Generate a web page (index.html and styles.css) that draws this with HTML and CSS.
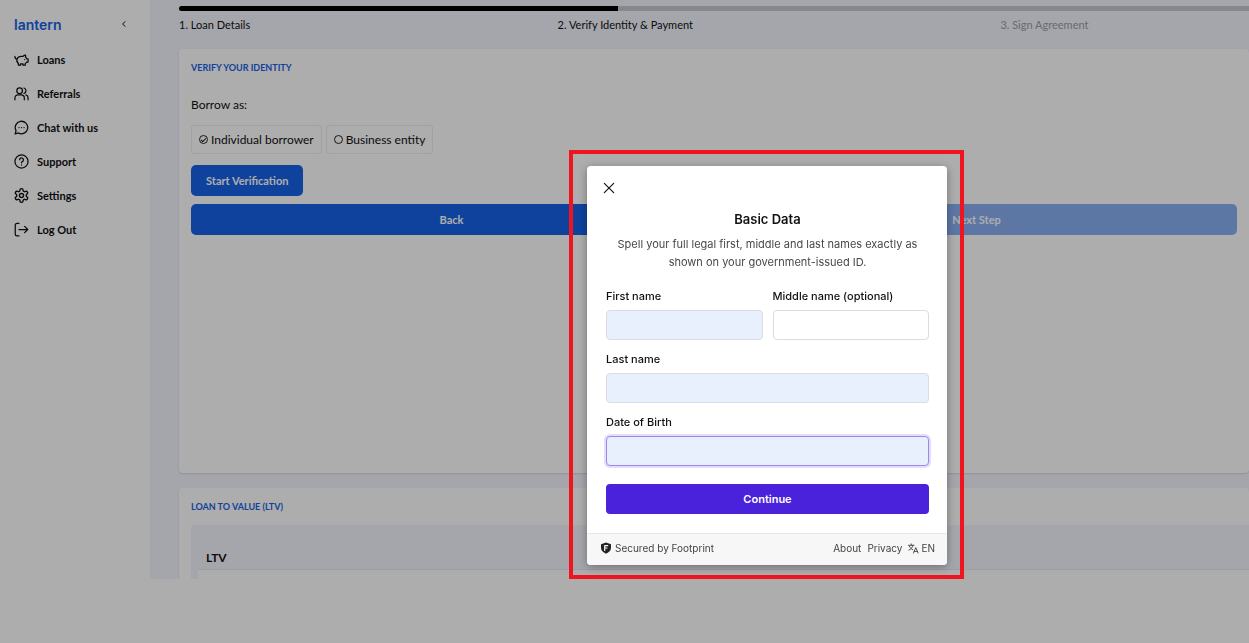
FILE: index.html
```html
<!DOCTYPE html>
<html lang="en">
<head>
    <meta charset="UTF-8">
    <meta name="viewport" content="width=device-width, initial-scale=1.0">
    <title>Lantern — Verify Identity</title>
    <link rel="stylesheet" href="styles.css">
</head>
<body>
    <div class="app">
        <aside class="sidebar">
            <div class="sidebar-top">
                <a href="#" class="logo">lantern</a>
                <button class="collapse" aria-label="Collapse menu">
                    <svg viewBox="0 0 24 24"><path d="M15 5l-7 7 7 7"/></svg>
                </button>
            </div>
            <nav>
                <a href="#">
                    <svg viewBox="0 0 24 24"><path d="M1.500 7c0 2.700 1.200 4.200 3.500 4.200M5 11.200c1-2.700 3.400-4.200 6.500-4.200h3c1-1.300 2.300-2 4-2v3.500c.9.700 1.500 1.500 1.900 2.500H22.500v5h-2.300c-.5 1-1.200 1.700-2.200 2.300V21h-3.500v-2h-4v2H7v-2.800c-2.400-1.700-3-4.200-2-7z"/><path d="M17 12v.1"/></svg>
                    Loans
                </a>
                <a href="#">
                    <svg viewBox="0 0 24 24"><circle cx="9" cy="7.500" r="4.500"/><path d="M1.500 22v-3a5 5 0 0 1 5-5h5a5 5 0 0 1 5 5v3M16 3.200a4.500 4.500 0 0 1 0 8.600M19 14.300a5 5 0 0 1 3.500 4.700v3"/></svg>
                    Referrals
                </a>
                <a href="#">
                    <svg viewBox="0 0 24 24"><path d="M7 20.700A10 10 0 1 0 3.300 17L1.800 22.200z"/><path d="M8 12h.1M12 12h.1M16 12h.1"/></svg>
                    Chat with us
                </a>
                <a href="#">
                    <svg viewBox="0 0 24 24"><circle cx="12" cy="12" r="10.500"/><path d="M9 9a3 3 0 0 1 6 .8c0 2-3 2.500-3 4.200M12 17.500v.1"/></svg>
                    Support
                </a>
                <a href="#">
                    <svg viewBox="1 1 22 22"><path d="M12.220 2h-.44a2 2 0 0 0-2 2v.18a2 2 0 0 1-1 1.730l-.43.25a2 2 0 0 1-2 0l-.15-.08a2 2 0 0 0-2.730.73l-.22.38a2 2 0 0 0 .73 2.730l.15.1a2 2 0 0 1 1 1.720v.51a2 2 0 0 1-1 1.740l-.15.09a2 2 0 0 0-.73 2.730l.22.38a2 2 0 0 0 2.730.73l.15-.08a2 2 0 0 1 2 0l.43.25a2 2 0 0 1 1 1.730V20a2 2 0 0 0 2 2h.44a2 2 0 0 0 2-2v-.18a2 2 0 0 1 1-1.730l.43-.25a2 2 0 0 1 2 0l.15.08a2 2 0 0 0 2.730-.73l.22-.39a2 2 0 0 0-.73-2.730l-.15-.08a2 2 0 0 1-1-1.740v-.5a2 2 0 0 1 1-1.740l.15-.09a2 2 0 0 0 .73-2.730l-.22-.38a2 2 0 0 0-2.730-.73l-.15.08a2 2 0 0 1-2 0l-.43-.25a2 2 0 0 1-1-1.730V4a2 2 0 0 0-2-2z"/><circle cx="12" cy="12" r="3"/></svg>
                    Settings
                </a>
                <a href="#">
                    <svg viewBox="0 0 24 24"><path d="M8 22H5a3 3 0 0 1-3-3V5a3 3 0 0 1 3-3h3M8 12h14M17 7l5 5-5 5"/></svg>
                    Log Out
                </a>
            </nav>
        </aside>

        <main class="main">
            <div class="progress"><div class="progress-fill"></div></div>
            <ol class="steps">
                <li>1. Loan Details</li>
                <li>2. Verify Identity &amp; Payment</li>
                <li class="upcoming">3. Sign Agreement</li>
            </ol>

            <section class="card identity">
                <h2>VERIFY YOUR IDENTITY</h2>
                <p class="borrow">Borrow as:</p>
                <div class="choices">
                    <label class="choice"><input type="radio" name="borrower" checked>Individual borrower</label>
                    <label class="choice"><input type="radio" name="borrower">Business entity</label>
                </div>
                <button class="btn start">Start Verification</button>
                <div class="actions">
                    <button class="btn">Back</button>
                    <button class="btn" disabled>Next Step</button>
                </div>
            </section>

            <section class="card ltv">
                <h2>LOAN TO VALUE (LTV)</h2>
                <div class="ltv-box">
                    <h3>LTV</h3>
                    <div class="ltv-chart"></div>
                </div>
            </section>
        </main>
    </div>

    <div class="overlay">
        <div class="highlight">
            <form class="modal" role="dialog" aria-labelledby="modalTitle">
                <div class="modal-body">
                    <button type="button" class="close" aria-label="Close">
                        <svg viewBox="0 0 12 12"><path d="M2 2l8 8M10 2l-8 8"/></svg>
                    </button>
                    <h1 id="modalTitle">Basic Data</h1>
                    <p class="intro">Spell your full legal first, middle and last names exactly as shown on your government-issued ID.</p>
                    <div class="row">
                        <div class="field">
                            <label for="firstName">First name</label>
                            <input type="text" id="firstName" class="filled">
                        </div>
                        <div class="field">
                            <label for="middleName">Middle name (optional)</label>
                            <input type="text" id="middleName">
                        </div>
                    </div>
                    <div class="field">
                        <label for="lastName">Last name</label>
                        <input type="text" id="lastName" class="filled">
                    </div>
                    <div class="field">
                        <label for="dob">Date of Birth</label>
                        <input type="text" id="dob" class="filled active">
                    </div>
                    <button type="submit" class="continue">Continue</button>
                </div>
                <div class="modal-footer">
                    <span class="secured">
                        <svg viewBox="0 0 12 12"><path d="M6 .5l5 1.800v3.500c0 2.800-2 4.700-5 5.900-3-1.200-5-3.100-5-5.900V2.300z" fill="#222"/><path d="M4.700 8.500V3.700h3M4.700 6h2.300" fill="none" stroke="#fff" stroke-width="1.200"/></svg>
                        Secured by Footprint
                    </span>
                    <a href="#">About</a>
                    <a href="#">Privacy</a>
                    <button type="button" class="lang">
                        <svg viewBox="0 0 12 12"><path d="M.5 2.500h6M3.500 1v1.500M5.500 2.500C5 5 3 7 1 7.700M1.500 3.500C2.200 5.200 4 6.800 5.300 7.400M6 11l2.500-6L11 11M6.800 9.200h3.400"/></svg>
                        EN
                    </button>
                </div>
            </form>
        </div>
    </div>
</body>
</html>
```

FILE: styles.css
```css
* {
    box-sizing: border-box;
}

body {
    margin: 0;
    background-color: #fff;
    color: #111;
    font-family: 'Lato', sans-serif;
    font-size: 11px;
}

h1, h2, h3, p, ol {
    margin: 0;
    padding: 0;
}

button, input {
    font-family: inherit;
    font-size: inherit;
    margin: 0;
}

button {
    border: none;
    padding: 0;
    background: none;
    color: inherit;
    cursor: pointer;
}

a {
    color: inherit;
    text-decoration: none;
}

svg {
    fill: none;
    stroke: currentColor;
    stroke-width: 2;
    stroke-linecap: round;
    stroke-linejoin: round;
    flex-shrink: 0;
}

.app {
    display: flex;
    height: 90vh;
    overflow: hidden;
}

/* Sidebar */
.sidebar {
    width: 150px;
    flex-shrink: 0;
    padding: 13px 20px 0 14px;
}

.sidebar-top {
    display: flex;
    align-items: center;
    justify-content: space-between;
    height: 22px;
    margin-bottom: 7px;
}

.logo {
    color: #1662e7;
    font-family: 'Inter', sans-serif;
    font-size: 14px;
    font-weight: 600;
}

.collapse {
    width: 10px;
    height: 10px;
}

.collapse svg {
    display: block;
    width: 8px;
    height: 8px;
    stroke-width: 3;
}

.sidebar nav a {
    display: flex;
    align-items: center;
    gap: 8px;
    height: 34px;
    font-weight: 700;
}

.sidebar nav svg {
    width: 15px;
    height: 15px;
}

/* Content */
.main {
    flex: 1;
    min-width: 0;
    padding: 6px 0 0 29px;
    background-color: #f4f5fe;
}

.progress {
    height: 5px;
    border-radius: 3px 0 0 3px;
    background-color: #c8c8d0;
}

.progress-fill {
    width: 41%;
    height: 100%;
    border-radius: 3px 0 0 3px;
    background-color: #000;
}

.steps {
    display: flex;
    justify-content: space-between;
    width: 85%;
    height: 38px;
    padding-top: 6px;
    line-height: 16px;
    list-style: none;
}

.upcoming {
    color: #9a9ba8;
}

.card {
    padding: 12px;
    background-color: #fff;
    border-radius: 4px;
    box-shadow: 0 1px 2px rgba(40, 40, 80, 0.15);
}

.identity {
    height: 66vh;
}

.card h2 {
    color: #1662e7;
    font-size: 9px;
    font-weight: 700;
    line-height: 13px;
}

.borrow {
    margin-top: 22px;
    font-size: 12px;
    line-height: 18px;
}

.choices {
    display: flex;
    gap: 4px;
    margin: 11px 0;
}

.choice {
    display: flex;
    align-items: center;
    gap: 3px;
    height: 29px;
    padding: 0 7px;
    border: 1px solid #ececf4;
    border-radius: 3px;
    font-size: 12px;
}

.choice input {
    appearance: none;
    display: grid;
    place-items: center;
    width: 9px;
    height: 9px;
    border: 1px solid #222;
    border-radius: 50%;
}

.choice input:checked::before {
    content: "";
    width: 4px;
    height: 2px;
    border-left: 1px solid #222;
    border-bottom: 1px solid #222;
    transform: rotate(-45deg);
}

.btn {
    height: 31px;
    border-radius: 5px;
    background-color: #1662e7;
    color: #fff;
    font-weight: 700;
}

.btn:disabled {
    opacity: 0.5;
    cursor: default;
}

.start {
    padding: 0 15px;
}

.actions {
    display: grid;
    grid-template-columns: 1fr 1fr;
    gap: 4px;
    margin-top: 8px;
}

.ltv {
    margin-top: 15px;
    padding-right: 0;
}

.ltv-box {
    margin-top: 12px;
    padding: 24px 0 0 7px;
    border-radius: 4px 0 0 0;
    background-color: #f4f5fe;
}

.ltv-box h3 {
    padding: 0 8px;
    font-size: 12px;
    font-weight: 700;
    line-height: 18px;
}

.ltv-chart {
    height: 120px;
    margin-top: 2px;
    border-top: 1px solid #e8e9f2;
    background-color: #fff;
}

/* Modal */
.overlay {
    position: fixed;
    inset: 0;
    display: flex;
    justify-content: center;
    align-items: flex-start;
    padding: 150px 0 0 284px;
    background-color: rgba(0, 0, 0, 0.32);
}

.highlight {
    padding: 12px 13px 10px 14px;
    border: 4px solid #f0141e;
}

.modal {
    width: 360px;
    overflow: hidden;
    border-radius: 4px;
    background-color: #fff;
    box-shadow: 0 2px 10px rgba(0, 0, 0, 0.35);
    font-family: 'Inter', sans-serif;
}

.modal-body {
    display: flex;
    flex-direction: column;
    padding: 14px 18px 19px 19px;
}

.close {
    width: 16px;
    height: 16px;
    margin-left: -5px;
}

.close svg {
    display: block;
    width: 14px;
    height: 14px;
    margin: auto;
    stroke-width: 1;
}

.modal h1 {
    margin-top: 14px;
    font-size: 13px;
    font-weight: 600;
    line-height: 18px;
    text-align: center;
}

.intro {
    margin: 7px 0 16px;
    color: #484848;
    line-height: 18px;
    text-align: center;
}

.row {
    display: grid;
    grid-template-columns: 1fr 1fr;
    gap: 10px;
}

.field {
    display: flex;
    flex-direction: column;
    gap: 5px;
    margin-bottom: 10px;
}

.field label {
    font-weight: 500;
    line-height: 18px;
}

.field input {
    width: 100%;
    height: 30px;
    padding: 0 10px;
    border: 1px solid #d9dce2;
    border-radius: 4px;
    background-color: #fff;
    outline: none;
}

.field .filled {
    background-color: #e8f0fe;
}

.field .active {
    border-color: #9a88ec;
    box-shadow: 0 0 0 2px #e4defb;
}

.continue {
    height: 30px;
    margin-top: 8px;
    border-radius: 4px;
    background-color: #4a22db;
    color: #fff;
    font-weight: 600;
}

.modal-footer {
    display: flex;
    align-items: center;
    gap: 6px;
    height: 32px;
    padding: 0 12px 3px 13px;
    border-top: 1px solid #e8e8e8;
    background-color: #f7f7f7;
    color: #444;
    font-size: 10px;
}

.secured {
    display: flex;
    align-items: center;
    gap: 3px;
    margin-right: auto;
}

.secured svg {
    width: 12px;
    height: 12px;
    stroke: none;
}

.lang {
    display: flex;
    align-items: center;
    gap: 2px;
}

.lang svg {
    width: 11px;
    height: 11px;
    stroke-width: 1;
}
```
